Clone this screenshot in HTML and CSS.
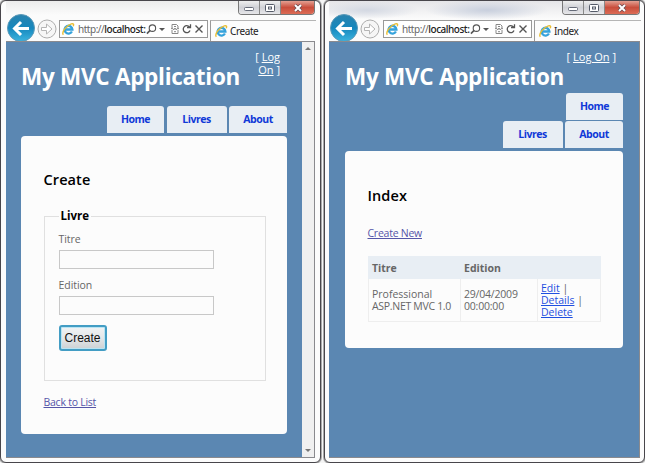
FILE: index.html
```html
<!DOCTYPE html>
<html lang="fr">
<head>
<meta charset="utf-8">
<title>My MVC Application</title>
<link rel="stylesheet" href="styles.css">
</head>
<body>
<svg class="defs" width="0" height="0">
  <defs>
    <linearGradient id="blue" x1="0" y1="0" x2="0" y2="1"><stop offset="0" stop-color="#2b83ae"/><stop offset=".5" stop-color="#1687bd"/><stop offset="1" stop-color="#3bb4df"/></linearGradient>
    <symbol id="back" viewBox="0 0 28 28"><circle cx="14" cy="14" r="13.5" fill="url(#blue)" stroke="#5b99b8"/><path d="M22 14.5H8M14 8l-6.5 6.5L14 21" fill="none" stroke="#fff" stroke-width="3"/></symbol>
    <symbol id="forward" viewBox="0 0 20 20"><circle cx="10" cy="10" r="9" fill="#f6f6f6" stroke="#adadad"/><path d="M4.500 8.500h5V5l5.500 5-5.500 5v-3.500h-5z" fill="#fff" stroke="#b5b5b5"/></symbol>
    <symbol id="ie" viewBox="0 0 14 14"><path d="M10.700 9.200A4.200 4.200 0 1 1 11.200 7H3.500" fill="none" stroke="#36a3dc" stroke-width="2.500"/><path d="M1.500 12.700C-1 10 5 2.500 10 1c2.500-.8 3 .8 2 2.500" fill="none" stroke="#e9bd32" stroke-width="1.500"/></symbol>
    <symbol id="search" viewBox="0 0 12 12"><circle cx="7" cy="4.500" r="3.500" fill="none" stroke="#555" stroke-width="1.200"/><path d="M4.500 7L1 10.500" stroke="#555" stroke-width="1.700"/></symbol>
    <symbol id="compat" viewBox="0 0 8 10"><path d="M1 4V.5h4.500l1.500 1.500v2M1 6v3.500h6V6" fill="none" stroke="#888"/><path d="M0 5l1.300-1 1.400 2L4 4l1.300 2 1.400-2L8 5M3 2.500h2M3 7.700h2" fill="none" stroke="#888"/></symbol>
    <symbol id="refresh" viewBox="0 0 10 10"><path d="M7.500 3A3.500 3.500 0 1 0 8 6.500M5 3.500h3.500V.3" fill="none" stroke="#555" stroke-width="1.300"/></symbol>
    <symbol id="stop" viewBox="0 0 10 10"><path d="M1.500 1.500l7 7m0-7l-7 7" stroke="#555" stroke-width="1.400"/></symbol>
    <symbol id="min" viewBox="0 0 10 8"><rect x=".5" y="3.500" width="9" height="3" rx="1" fill="#fff" stroke="#666b78"/></symbol>
    <symbol id="max" viewBox="0 0 10 8"><rect x=".5" y=".5" width="9" height="7" rx="1" fill="#fff" stroke="#555b68"/><rect x="3.500" y="3" width="3" height="2" fill="#fff" stroke="#555b68"/></symbol>
    <symbol id="close" viewBox="0 0 10 8"><path d="M2 1l6 6m0-6L2 7" stroke="#6b4b50" stroke-width="3.500"/><path d="M2 1l6 6m0-6L2 7" stroke="#fff" stroke-width="2"/></symbol>
  </defs>
</svg>
<div class="desktop">
  <section class="window">
    <header class="chrome">
      <div class="caption"><span class="cap"><svg width="10" height="8"><use href="#min"/></svg></span><span class="cap"><svg width="10" height="8"><use href="#max"/></svg></span><span class="cap close"><svg width="10" height="8"><use href="#close"/></svg></span></div>
      <div class="toolbar">
        <svg class="back" width="28" height="28"><use href="#back"/></svg>
        <svg class="forward" width="20" height="20"><use href="#forward"/></svg>
        <div class="address"><svg class="ie" width="13" height="13"><use href="#ie"/></svg><span class="url">http://<b>localhost:</b></span><svg class="search" width="11" height="11"><use href="#search"/></svg><i class="caret"></i><svg class="compat" width="8" height="10"><use href="#compat"/></svg><svg class="refresh" width="10" height="10"><use href="#refresh"/></svg><svg width="10" height="10"><use href="#stop"/></svg></div>
        <div class="tab"><svg class="ie" width="13" height="13"><use href="#ie"/></svg><span>Create</span></div>
      </div>
    </header>
    <div class="viewport">
      <main class="page page-create">
        <div class="masthead"><h1>My MVC Application</h1><p class="logon">[ <a>Log</a><br><a>On</a> ]</p></div>
        <nav class="menu"><a class="home">Home</a><a class="livres">Livres</a><a class="about">About</a></nav>
        <div class="panel">
          <h2>Create</h2>
          <fieldset>
            <legend>Livre</legend>
            <label for="titre">Titre</label>
            <input id="titre" type="text">
            <label for="edition">Edition</label>
            <input id="edition" type="text">
            <button type="button">Create</button>
          </fieldset>
          <a class="visited">Back to List</a>
        </div>
      </main>
      <div class="scrollbar"><i class="up"></i><i class="down"></i></div>
    </div>
  </section>
  <section class="window second">
    <header class="chrome">
      <div class="caption"><span class="cap"><svg width="10" height="8"><use href="#min"/></svg></span><span class="cap"><svg width="10" height="8"><use href="#max"/></svg></span><span class="cap close"><svg width="10" height="8"><use href="#close"/></svg></span></div>
      <div class="toolbar">
        <svg class="back" width="28" height="28"><use href="#back"/></svg>
        <svg class="forward" width="20" height="20"><use href="#forward"/></svg>
        <div class="address"><svg class="ie" width="13" height="13"><use href="#ie"/></svg><span class="url">http://<b>localhost:</b></span><svg class="search" width="11" height="11"><use href="#search"/></svg><i class="caret"></i><svg class="compat" width="8" height="10"><use href="#compat"/></svg><svg class="refresh" width="10" height="10"><use href="#refresh"/></svg><svg width="10" height="10"><use href="#stop"/></svg></div>
        <div class="tab"><svg class="ie" width="13" height="13"><use href="#ie"/></svg><span>Index</span></div>
      </div>
    </header>
    <div class="viewport">
      <main class="page page-index">
        <div class="masthead"><h1>My MVC Application</h1><p class="logon">[ <a>Log On</a> ]</p></div>
        <nav class="menu"><a class="home">Home</a><a class="livres">Livres</a><a class="about">About</a></nav>
        <div class="panel">
          <h2>Index</h2>
          <a class="visited">Create New</a>
          <table>
            <thead><tr><th class="c1">Titre</th><th class="c2">Edition</th><th></th></tr></thead>
            <tbody><tr><td>Professional<br><span class="asp">ASP.NET MVC 1.0</span></td><td>29/04/2009<br>00:00:00</td><td class="links"><a>Edit</a> |<br><a>Details</a> |<br><a>Delete</a></td></tr></tbody>
          </table>
        </div>
      </main>
    </div>
  </section>
</div>
</body>
</html>
```

FILE: styles.css
```css
* { box-sizing: border-box; }
body { margin: 0; background: #f5f5f5; font: 10.5px/12px "Open Sans", sans-serif; color: #666; overflow: hidden; }
.defs { position: absolute; }
svg { display: block; flex: none; }
.desktop { display: flex; gap: 3px; width: 645px; height: 463px; }
.window { width: 321px; height: 463px; flex: none; display: flex; flex-direction: column; padding: 0 5px 4px; border: 1px solid #48464b; border-radius: 6px; background: #fcfcfc; box-shadow: 0 0 0 1px #aaa; }
.second { padding: 0 4px 4px; }

.chrome { height: 40px; flex: none; background: linear-gradient(#ececec, #fbfbfb 14px); }
.second .chrome { background: radial-gradient(ellipse 52px 9px at 38px 9px, #d3d8e2, transparent), radial-gradient(ellipse 62px 10px at 158px 9px, #c8cfdd, transparent), linear-gradient(#e5e5e8, #fbfbfb 18px); }
.caption { display: flex; width: 77px; height: 14px; margin-left: 232px; border: 1px solid #777; border-top: 0; border-radius: 0 0 4px 4px; overflow: hidden; }
.second .caption { width: 78px; margin-left: 233px; }
.cap { width: 21px; display: flex; align-items: center; justify-content: center; background: linear-gradient(#eee, #d0d1d6 50%, #e6e6e9); border-right: 1px solid #888; }
.cap.close { flex: 1; border: 0; background: linear-gradient(#e4a092, #c94e3c 50%, #dc6b55); }
.toolbar { display: flex; height: 26px; padding-left: 1px; }
.back { margin-top: -1px; }
.forward { margin: 4px 2px 0; }
.address { width: 149px; height: 18px; margin-top: 5px; border: 1px solid #999; background: #fff; display: flex; align-items: center; padding-left: 2px; }
.url { width: 68px; margin-left: 3px; color: #666; font: 10px/14px "Noto Sans", sans-serif; letter-spacing: -.48px; white-space: nowrap; }
.url b { font-weight: 500; color: #222; }
.caret { border: 3px solid transparent; border-top: 3px solid #555; border-bottom: 0; margin: 0 6px 0 2px; }
.compat { margin-right: 3px; }
.refresh { margin-right: 2px; }
.tab { flex: 1; height: 21px; margin: 5px -1px 0 2px; border-left: 1px solid #999; border-top: 1px solid #b5b5b5; display: flex; align-items: center; padding-left: 4px; gap: 2px; color: #222; font: 10px/14px "Noto Sans", sans-serif; letter-spacing: -.4px; background: #fcfcfc; }
.second .forward { margin-right: 3px; }

.viewport { flex: 1; display: flex; border: 1px solid #8a8a8e; border-width: 1px 1px 1px 0; background: #5b87b2; }
.page { flex: 1; min-width: 0; padding: 0 15px; }
.second .page { padding: 0 16px; }
.masthead { position: relative; height: 65px; }
h1 { margin: 0; padding-top: 19px; color: #fff; font: 700 22.5px/32px "Open Sans", sans-serif; letter-spacing: -.28px; white-space: nowrap; }
.logon { position: absolute; right: 7px; top: 8px; margin: 0; color: #fff; text-align: right; font-size: 11px; line-height: 13px; white-space: nowrap; }
.logon a { text-decoration: underline; }
.menu { display: flex; flex-wrap: wrap; justify-content: flex-end; gap: 1.5px 2.5px; }
.menu a { height: 27px; border-radius: 3px 3px 0 0; background: #e8eef4; color: #1039d8; font-weight: 700; line-height: 27px; text-align: center; letter-spacing: -.45px; }
.home { width: 57px; }
.livres { width: 60px; }
.about { width: 58px; }
.page-create .masthead { height: 64px; }
.page-index .masthead { height: 50.5px; }
.page-index .home { margin-left: 200px; }
.panel { margin-top: 3px; padding: 34px 22px 0 22.5px; background: #fcfcfc; border-radius: 4px; }
.page-create .panel { height: 298px; }
.page-index .panel { height: 197px; padding-top: 35px; }
h2 { margin: 0; color: #000; font: 600 14.500px/20px "Open Sans", sans-serif; letter-spacing: .1px; }
fieldset { margin: 20px 0 15px; padding: 11px 14px 0; border: 1px solid #e0e0e0; height: 171px; width: 222px; }
legend { padding: 0 2px; color: #000; font-weight: 700; font-size: 11.500px; line-height: 12px; }
label, input { display: block; }
label { height: 17px; letter-spacing: -.05px; }
input { width: 155px; height: 19px; margin: 0 0 10px; padding: 2px; border: 1px solid #c8c8c8; background: #fcfcfc; }
button { display: block; width: 48px; height: 26px; padding: 0; border: 2px solid #439dc4; border-radius: 3px; background: linear-gradient(#f1f3f4, #e4e7e9 50%, #cdd1d4); color: #111; font: 12px "Liberation Sans", sans-serif; box-shadow: inset 0 0 0 1px #b9e4f3; }
.visited { display: inline-block; color: #5555a8; text-decoration: underline; letter-spacing: -.25px; }
.page-index .visited { margin-top: 21px; }
.scrollbar { width: 12px; background: #f0f0f0; display: flex; flex-direction: column; justify-content: space-between; align-items: center; padding: 5px 0; }
.scrollbar i { border: 3px solid transparent; }
.scrollbar .up { border-bottom-color: #777; border-top: 0; }
.scrollbar .down { border-top-color: #777; border-bottom: 0; }
table { width: 233px; margin-top: 17px; border-collapse: collapse; table-layout: fixed; }
th, td { padding: 0 4px 0 3.5px; border: 1px solid #eee; text-align: left; white-space: nowrap; }
th { height: 22px; background: #e8eef4; border-color: #e8eef4; }
td { height: 43px; }
.c1 { width: 92px; }
.c2 { width: 77px; }
.asp { letter-spacing: -.3px; }
td:nth-child(2) { letter-spacing: -.2px; }
.links a { color: #1f4fe0; text-decoration: underline; }
```
